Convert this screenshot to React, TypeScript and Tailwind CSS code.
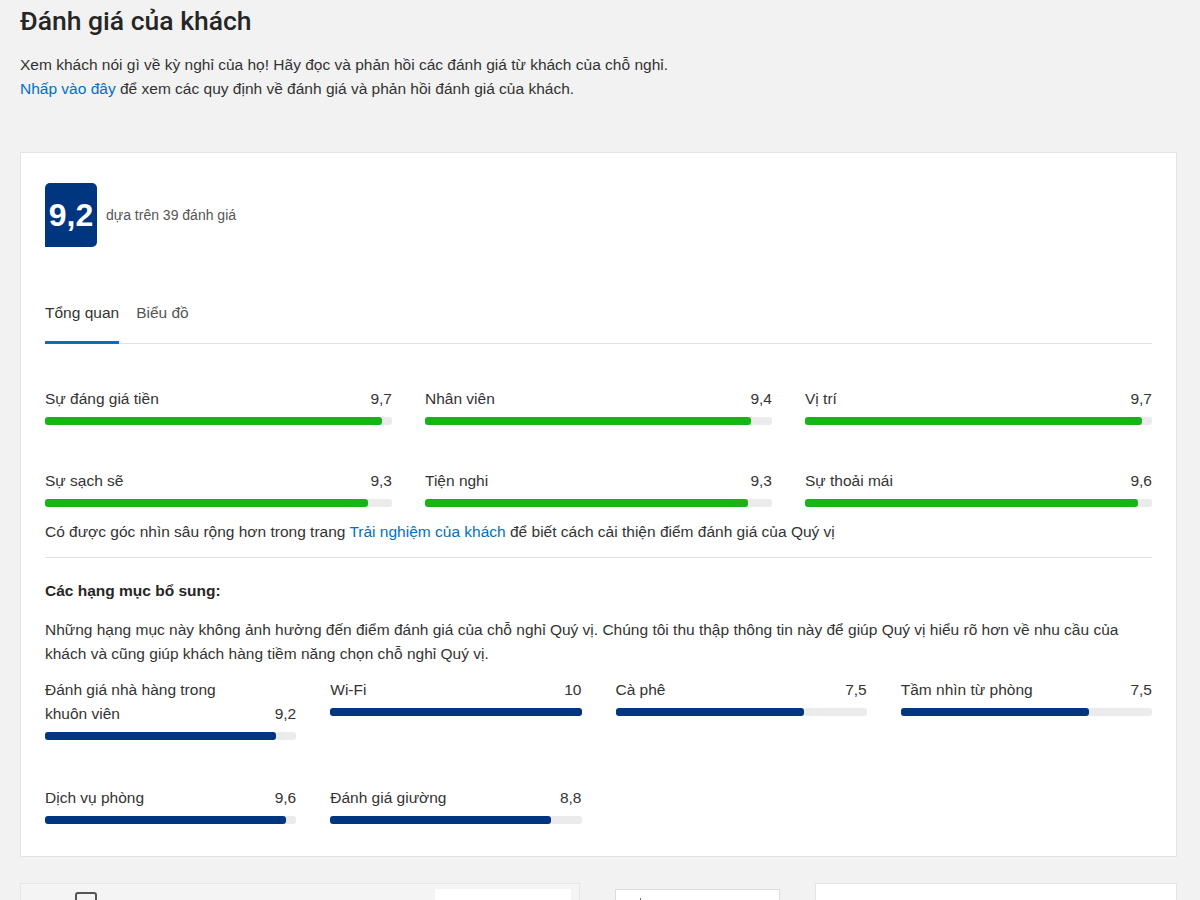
import React from "react";

type Score = { label: string; value: number };

const mainScores: Score[] = [
  { label: "Sự đáng giá tiền", value: 9.7 },
  { label: "Nhân viên", value: 9.4 },
  { label: "Vị trí", value: 9.7 },
  { label: "Sự sạch sẽ", value: 9.3 },
  { label: "Tiện nghi", value: 9.3 },
  { label: "Sự thoải mái", value: 9.6 },
];

const extraScores: Score[] = [
  { label: "Đánh giá nhà hàng trong khuôn viên", value: 9.2 },
  { label: "Wi-Fi", value: 10 },
  { label: "Cà phê", value: 7.5 },
  { label: "Tầm nhìn từ phòng", value: 7.5 },
  { label: "Dịch vụ phòng", value: 9.6 },
  { label: "Đánh giá giường", value: 8.8 },
];

const fmt = (v: number) => (Number.isInteger(v) ? String(v) : v.toFixed(1).replace(".", ","));

const ScoreBar: React.FC<{ item: Score; color: "green" | "blue" }> = ({ item, color }) => (
  <div className="flex flex-col">
    <div className="flex items-end justify-between text-[15.5px] leading-[24px] text-[#333]">
      <span className="max-w-[200px]">{item.label}</span>
      <span>{fmt(item.value)}</span>
    </div>
    <div className="mt-[6px] h-[8px] w-full rounded-[3px] bg-[#ebebeb]">
      <div
        className={
          color === "green"
            ? "h-full rounded-[3px] bg-[#17b317]"
            : "h-full rounded-[3px] bg-[#003580]"
        }
        style={{ width: `${item.value * 10}%` }}
      />
    </div>
  </div>
);

export default function App() {
  return (
    <div
      className="min-h-[1000px] w-full bg-[#f2f2f2] text-[#333]"
      style={{ fontFamily: "'Liberation Sans', Arial, sans-serif" }}
    >
      <div className="px-[20px] pt-[4px]">
        <h1 className="text-[26.5px] leading-[34px] font-medium text-[#262626]" style={{ fontFamily: "Roboto, 'Liberation Sans', sans-serif" }}>
          Đánh giá của khách
        </h1>
        <p className="mt-[15px] text-[15.5px] leading-[24px] text-[#333]">
          Xem khách nói gì về kỳ nghỉ của họ! Hãy đọc và phản hồi các đánh giá từ khách của chỗ nghỉ.
          <br />
          <span className="text-[#0071c2]">Nhấp vào đây</span> để xem các quy định về đánh giá và phản hồi đánh giá của khách.
        </p>
      </div>

      <div className="mx-[20px] mt-[51px] w-[1157px] border border-[#e3e3e3] bg-white px-[24px] pt-[30px] pb-[32px]">
        <div className="flex items-center gap-[9px]">
          <div className="flex h-[64px] w-[52px] items-center justify-center rounded-[5px] rounded-bl-none bg-[#003580] text-[32px] font-bold text-white">
            9,2
          </div>
          <span className="text-[14px] text-[#555]">dựa trên 39 đánh giá</span>
        </div>

        <div className="mt-[54px] flex gap-[17px] border-b border-[#e2e2e2] text-[15.5px] leading-[24px]">
          <div className="-mb-px border-b-[3px] border-[#0071c2] pb-[16px] text-[#333]">Tổng quan</div>
          <div className="pb-[16px] text-[#555]">Biểu đồ</div>
        </div>

        <div className="mt-[43px] grid grid-cols-3 gap-x-[33px] gap-y-[44px]">
          {mainScores.map((s) => (
            <ScoreBar key={s.label} item={s} color="green" />
          ))}
        </div>

        <p className="mt-[13px] text-[15.5px] leading-[24px]">
          Có được góc nhìn sâu rộng hơn trong trang <span className="text-[#0071c2]">Trải nghiệm của khách</span> để biết cách cải thiện điểm đánh giá của Quý vị
        </p>

        <div className="mt-[13px] border-t border-[#e2e2e2]" />

        <h3 className="mt-[21px] text-[15.5px] leading-[24px] font-bold text-[#262626]">Các hạng mục bổ sung:</h3>
        <p className="mt-[15px] text-[15.5px] leading-[24px]">
          Những hạng mục này không ảnh hưởng đến điểm đánh giá của chỗ nghỉ Quý vị. Chúng tôi thu thập thông tin này để giúp Quý vị hiểu rõ hơn về nhu cầu của khách và cũng giúp khách hàng tiềm năng chọn chỗ nghỉ Quý vị.
        </p>

        <div className="mt-[12px] grid grid-cols-4 items-end gap-x-[34px] gap-y-[46px]">
          {extraScores.slice(0, 4).map((s) => (
            <div key={s.label} className="self-start">
              <ScoreBar item={s} color="blue" />
            </div>
          ))}
          {extraScores.slice(4).map((s) => (
            <ScoreBar key={s.label} item={s} color="blue" />
          ))}
        </div>
      </div>

      <div className="mx-[20px] mt-[26px] flex">
        <div className="flex h-[120px] w-[560px] border border-[#e6e6e6] bg-[#f4f4f4]">
          <div className="ml-[54px] mt-[8px] h-[18px] w-[22px] rounded-[3px] border-2 border-[#555]" />
          <div className="ml-auto mr-[8px] mt-[5px] h-[110px] w-[136px] bg-white" />
        </div>
        <div className="ml-[35px] mt-[6px] flex h-[110px] w-[165px] border border-[#dcdcdc] bg-white">
          <div className="ml-[24px] mt-[8px] h-[10px] w-px bg-[#777]" />
        </div>
        <div className="ml-[35px] h-[120px] w-[362px] border border-[#e3e3e3] bg-white" />
      </div>
    </div>
  );
}
